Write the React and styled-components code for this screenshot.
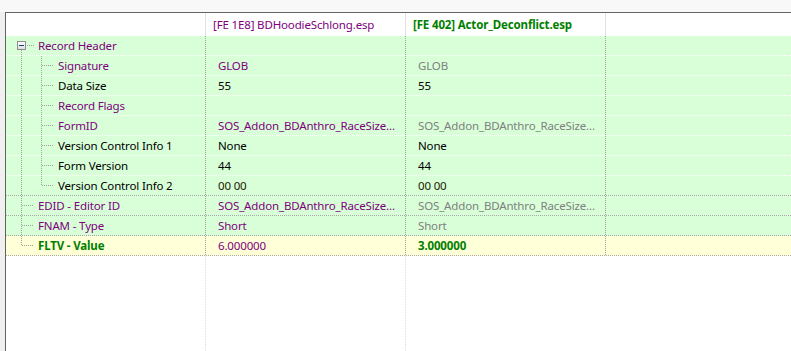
import styled, { createGlobalStyle } from 'styled-components'

const GlobalStyle = createGlobalStyle`
  html, body {
    margin: 0;
    padding: 0;
    background: #f8f8f8;
  }
  body {
    font-family: "Noto Sans", "Liberation Sans", sans-serif;
    font-size: 11.5px;
    letter-spacing: -0.15px;
  }
`

const COLORS = {
  purple: '#800080',
  gray: '#808080',
  black: '#000000',
  olive: '#202000',
  green: '#008000',
}

const Window = styled.div`
  height: 351px;
  display: flex;
  flex-direction: column;
  overflow: hidden;
`

const TopStrip = styled.div`
  flex: none;
  height: 12px;
  background: #f8f8f8;
`

const Body = styled.div`
  flex: 1;
  display: flex;
  min-height: 0;
`

const LeftGutter = styled.div`
  flex: none;
  width: 5px;
  background: #f0f0f0;
`

const Tree = styled.div`
  flex: 1;
  display: flex;
  flex-direction: column;
  background: #ffffff;
  border-top: 1px solid #646464;
  border-left: 1px solid #646464;
`

const Header = styled.div`
  flex: none;
  display: flex;
  height: 23px;
`

const HeadCell = styled.div`
  flex: none;
  width: 200px;
  box-sizing: border-box;
  border-right: 1px solid #e3e3e3;
  padding-left: 7px;
  display: flex;
  align-items: center;
  color: ${(p) => COLORS[p.$color] || '#000'};
  font-weight: ${(p) => (p.$bold ? 700 : 400)};
  white-space: nowrap;
`

const Row = styled.div`
  flex: none;
  display: flex;
  height: 20px;
  box-sizing: border-box;
  background: ${(p) => (p.$hilite ? '#ffffd8' : '#d8ffd8')};
  border-bottom: 1px dotted ${(p) => (p.$sep === 'gray' ? '#a8a8a8' : '#ffffff')};
`

const NameCell = styled.div`
  flex: none;
  width: 200px;
  box-sizing: border-box;
  border-right: 1px dotted #a0a0a0;
  display: flex;
  align-items: center;
  white-space: nowrap;
`

const ValueCell = styled.div`
  flex: none;
  width: 200px;
  box-sizing: border-box;
  border-right: 1px dotted ${(p) => p.$line || '#a0a0a0'};
  padding-left: 12px;
  display: flex;
  align-items: center;
  white-space: nowrap;
  overflow: hidden;
`

const RestCell = styled.div`
  flex: 1;
`

const Text = styled.span`
  color: ${(p) => COLORS[p.$color] || '#000'};
  font-weight: ${(p) => (p.$bold ? 700 : 400)};
  line-height: 19px;
`

const Filler = styled.div`
  flex: 1;
  display: flex;
`

const FillCell = styled.div`
  flex: none;
  width: 200px;
  box-sizing: border-box;
  border-right: 1px dotted ${(p) => p.$line || '#dcdcdc'};
`

const DOT = '#a0a0a0'

function Connector({ kind }) {
  const lines = []
  const v = (x, y1, y2) => (
    <line key={`v${x}${y1}`} x1={x + 0.5} y1={y1} x2={x + 0.5} y2={y2} stroke={DOT} strokeDasharray="1 1" shapeRendering="crispEdges" />
  )
  const h = (x1, x2) => (
    <line key={`h${x1}`} x1={x1} y1={9.5} x2={x2} y2={9.5} stroke={DOT} strokeDasharray="1 1" shapeRendering="crispEdges" />
  )
  let width = 32
  if (kind === 'root') {
    lines.push(v(15, 14, 19))
    lines.push(h(21, 28))
  } else if (kind === 'child' || kind === 'lastChild') {
    width = 52
    lines.push(v(15, 0, 19))
    lines.push(v(35, 0, kind === 'lastChild' ? 10 : 19))
    lines.push(h(36, 48))
  } else if (kind === 'top') {
    lines.push(v(15, 0, 19))
    lines.push(h(16, 28))
  } else if (kind === 'lastTop') {
    lines.push(v(15, 0, 10))
    lines.push(h(16, 28))
  }
  return (
    <svg width={width} height={19} style={{ flex: 'none', display: 'block' }}>
      {lines}
      {kind === 'root' && (
        <g shapeRendering="crispEdges">
          <defs>
            <linearGradient id="boxfill" x1="0" y1="0" x2="0" y2="1">
              <stop offset="0" stopColor="#ffffff" />
              <stop offset="1" stopColor="#dcdcdc" />
            </linearGradient>
          </defs>
          <rect x={11.5} y={5.5} width={8} height={8} fill="url(#boxfill)" stroke="#8f8f8f" />
          <line x1={13} y1={9.5} x2={18} y2={9.5} stroke="#1f3e78" />
        </g>
      )}
    </svg>
  )
}

const rows = [
  { kind: 'root', label: 'Record Header', lc: 'purple', cells: [] },
  { kind: 'child', label: 'Signature', lc: 'purple', cells: [['GLOB', 'purple'], ['GLOB', 'gray']] },
  { kind: 'child', label: 'Data Size', lc: 'black', cells: [['55', 'black'], ['55', 'black']] },
  { kind: 'child', label: 'Record Flags', lc: 'purple', cells: [] },
  {
    kind: 'child',
    label: 'FormID',
    lc: 'purple',
    cells: [['SOS_Addon_BDAnthro_RaceSize...', 'purple'], ['SOS_Addon_BDAnthro_RaceSize...', 'gray']],
  },
  { kind: 'child', label: 'Version Control Info 1', lc: 'black', cells: [['None', 'black'], ['None', 'black']] },
  { kind: 'child', label: 'Form Version', lc: 'black', cells: [['44', 'black'], ['44', 'black']] },
  { kind: 'lastChild', label: 'Version Control Info 2', lc: 'black', sep: 'gray', cells: [['00 00', 'olive'], ['00 00', 'olive']] },
  {
    kind: 'top',
    label: 'EDID - Editor ID',
    lc: 'purple',
    sep: 'gray',
    cells: [['SOS_Addon_BDAnthro_RaceSize...', 'purple'], ['SOS_Addon_BDAnthro_RaceSize...', 'gray']],
  },
  { kind: 'top', label: 'FNAM - Type', lc: 'purple', sep: 'gray', cells: [['Short', 'purple'], ['Short', 'gray']] },
  {
    kind: 'lastTop',
    label: 'FLTV - Value',
    lc: 'green',
    bold: true,
    hilite: true,
    sep: 'gray',
    cells: [['6.000000', 'purple'], ['3.000000', 'green', true]],
  },
]

export default function App() {
  return (
    <Window>
      <GlobalStyle />
      <TopStrip />
      <Body>
        <LeftGutter />
        <Tree>
          <Header>
            <HeadCell />
            <HeadCell $color="purple">[FE 1E8] BDHoodieSchlong.esp</HeadCell>
            <HeadCell $color="green" $bold>
              [FE 402] Actor_Deconflict.esp
            </HeadCell>
          </Header>
          {rows.map((r) => (
            <Row key={r.label} $hilite={r.hilite} $sep={r.sep}>
              <NameCell>
                <Connector kind={r.kind} />
                <Text $color={r.lc} $bold={r.bold}>
                  {r.label}
                </Text>
              </NameCell>
              <ValueCell>
                {r.cells[0] && <Text $color={r.cells[0][1]} $bold={r.cells[0][2]}>{r.cells[0][0]}</Text>}
              </ValueCell>
              <ValueCell>
                {r.cells[1] && <Text $color={r.cells[1][1]} $bold={r.cells[1][2]}>{r.cells[1][0]}</Text>}
              </ValueCell>
              <RestCell />
            </Row>
          ))}
          <Filler>
            <FillCell />
            <FillCell />
            <FillCell $line="transparent" />
          </Filler>
        </Tree>
      </Body>
    </Window>
  )
}
